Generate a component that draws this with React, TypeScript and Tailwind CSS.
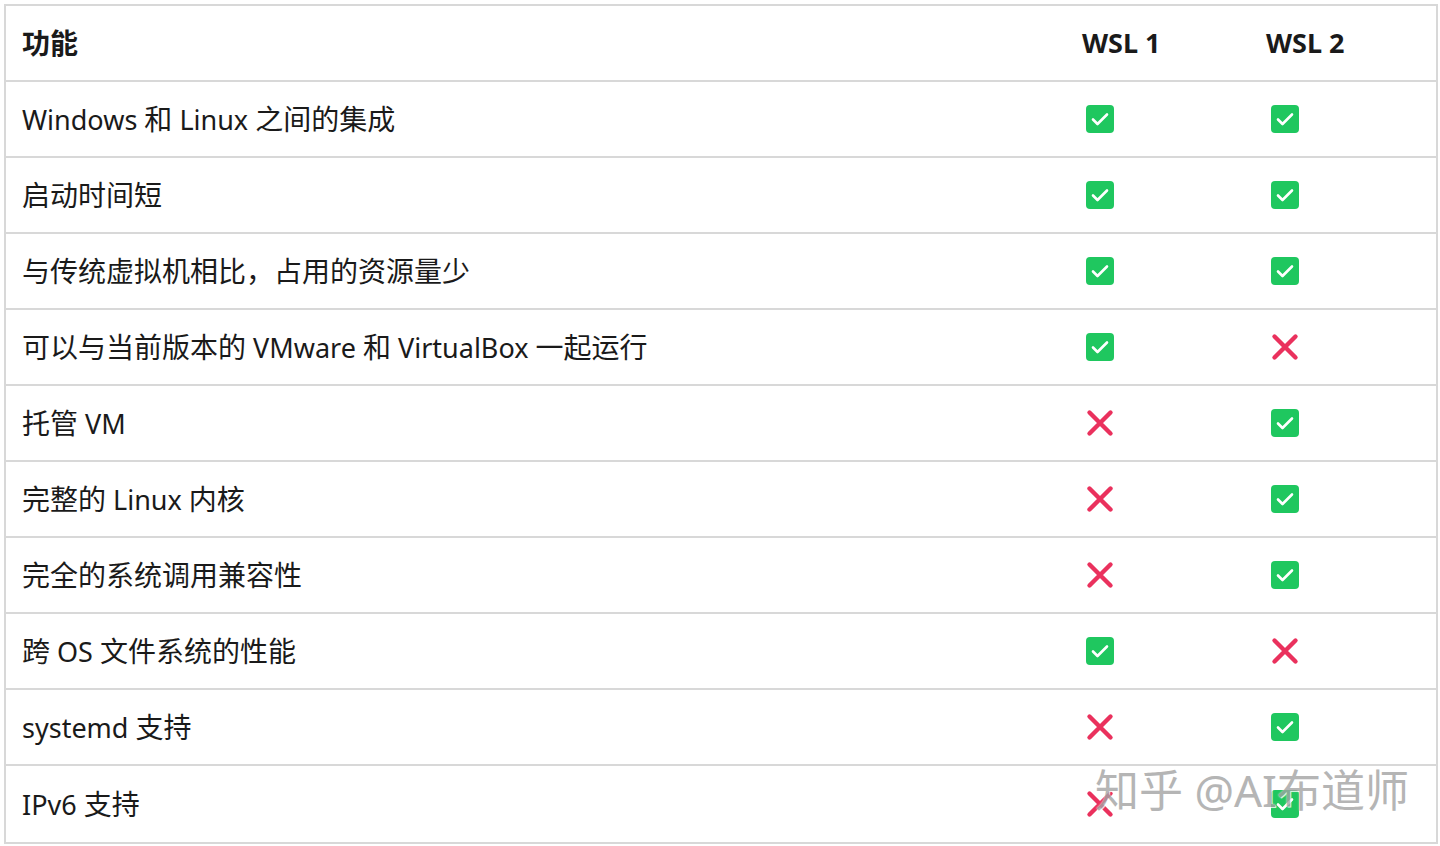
import React from "react";

type Mark = "yes" | "no";

const rows: [string, Mark, Mark][] = [
  ["Windows 和 Linux 之间的集成", "yes", "yes"],
  ["启动时间短", "yes", "yes"],
  ["与传统虚拟机相比，占用的资源量少", "yes", "yes"],
  ["可以与当前版本的 VMware 和 VirtualBox 一起运行", "yes", "no"],
  ["托管 VM", "no", "yes"],
  ["完整的 Linux 内核", "no", "yes"],
  ["完全的系统调用兼容性", "no", "yes"],
  ["跨 OS 文件系统的性能", "yes", "no"],
  ["systemd 支持", "no", "yes"],
  ["IPv6 支持", "no", "yes"],
];

// CJK glyphs in the shot are a touch larger than the latin ones
function Label({ text }: { text: string }) {
  const parts = text.split(/([\u3000-\u9fff\uff00-\uffef]+)/);
  return (
    <>
      {parts.map((p, i) =>
        i % 2 === 1 ? (
          <span key={i} className="text-[28px]">
            {p}
          </span>
        ) : (
          <span key={i}>{p}</span>
        )
      )}
    </>
  );
}

function Check() {
  return (
    <svg width="28" height="28" viewBox="0 0 28 28" className="block">
      <rect x="0" y="0" width="28" height="28" rx="4" fill="#1fc75f" />
      <path d="M7 14.5l4.5 4.5L21 9.5" fill="none" stroke="#fff" strokeWidth="2.6" strokeLinecap="round" strokeLinejoin="round" />
    </svg>
  );
}

function Cross() {
  return (
    <svg width="28" height="28" viewBox="0 0 28 28" className="block">
      <path d="M3.5 3.5L24.5 24.5M24.5 3.5L3.5 24.5" fill="none" stroke="#ea315d" strokeWidth="4.4" strokeLinecap="round" />
    </svg>
  );
}

function Icon({ m }: { m: Mark }) {
  return m === "yes" ? <Check /> : <Cross />;
}

export default function App() {
  return (
    <div
      className="relative min-h-[846px] w-[1440px] bg-white p-1 text-[#1a1a1a]"
      style={{ fontFamily: '"Noto Sans", "Noto Sans CJK SC", sans-serif' }}
    >
      <div className="w-[1434px] border-2 border-[#d8d8d8]">
        {/* header */}
        <div className="grid h-[76px] grid-cols-[1060px_185px_1fr] items-center border-b-2 border-[#d8d8d8]">
          <div className="pl-4 text-[28px] font-bold">功能</div>
          <div className="pl-4 text-[27px] font-bold">WSL 1</div>
          <div className="pl-[15px] text-[27px] font-bold">WSL 2</div>
        </div>
        {rows.map(([label, a, b], i) => (
          <div
            key={label}
            className={
              "grid h-[76px] grid-cols-[1060px_185px_1fr] items-center " +
              (i < rows.length - 1 ? "border-b-2 border-[#d8d8d8]" : "")
            }
          >
            <div className="pl-4 text-[27px] leading-none">
              <Label text={label} />
            </div>
            <div className="pl-5">
              <Icon m={a} />
            </div>
            <div className="pl-5">
              <Icon m={b} />
            </div>
          </div>
        ))}
      </div>
      {/* watermark */}
      <div
        className="pointer-events-none absolute left-[1095px] top-[757px] text-[44px] text-[#a3a3a3] opacity-80"
        style={{ textShadow: "0 0 2px #fff, 1px 1px 0 #fff" }}
      >
        知乎 @AI布道师
      </div>
    </div>
  );
}
